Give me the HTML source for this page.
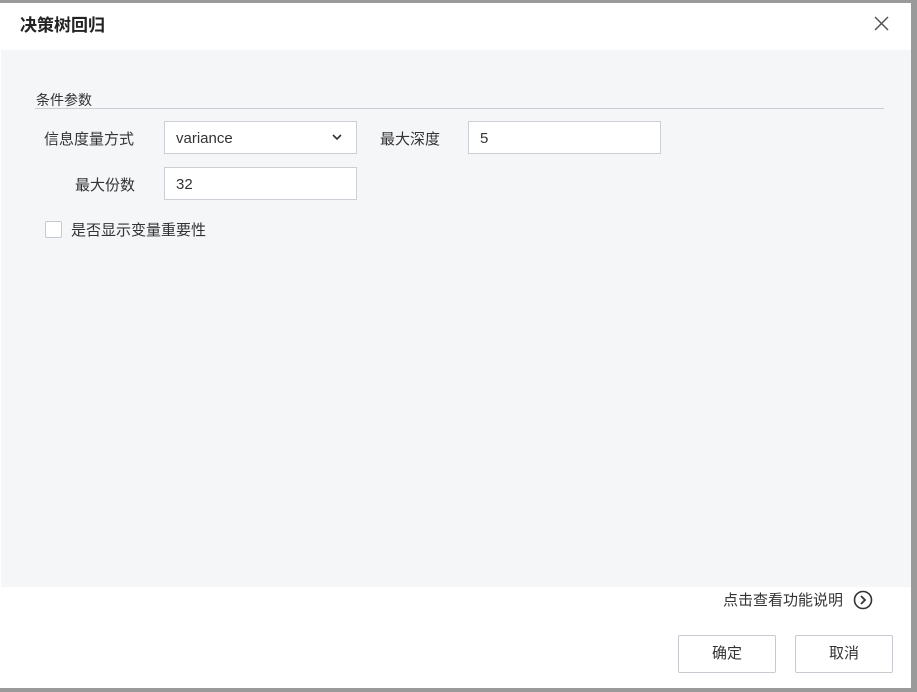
<!DOCTYPE html>
<html><head><meta charset="utf-8"><style>
*{box-sizing:border-box;margin:0;padding:0}
body{width:917px;height:692px;background:#9a9a9a;position:relative;overflow:hidden;font-family:"Liberation Sans","Noto Sans CJK SC",sans-serif;color:#333}
.dlg{position:absolute;left:0;top:3px;width:911px;height:685px;background:#fff}
.title{position:absolute;left:20px;top:8px;font-size:17px;font-weight:bold;color:#222}
.body{position:absolute;left:1px;top:47px;width:910px;height:537px;background:#f4f6f8}
.lbl{position:absolute;font-size:15px;color:#333}
.line{position:absolute;left:34px;top:58px;width:849px;height:1px;background:#c9ced6}
.inp{position:absolute;background:#fff;border:1px solid #ccd0d6;font-size:15px;padding-left:11px;line-height:34px;height:33px;overflow:hidden}
.cb{position:absolute;left:44px;top:171px;width:17px;height:17px;border:1px solid #c6cad0;background:#fff;border-radius:2px}
.btn{position:absolute;width:98px;height:38px;border:1px solid #c6cad0;background:#fff;font-size:15px;text-align:center;line-height:36px;border-radius:2px}
</style></head><body>
<div class="dlg">
<div class="title">决策树回归</div>
<svg style="position:absolute;left:874px;top:13px" width="15" height="15" viewBox="0 0 15 15"><path d="M1 1L14 14M14 1L1 14" stroke="#555" stroke-width="1.5"/></svg>
<div class="body">
<div class="lbl" style="left:35px;top:40px;font-size:14px">条件参数</div>
<div class="line"></div>
<div class="lbl" style="left:43px;top:78px">信息度量方式</div>
<div class="inp" style="left:163px;top:71px;width:193px">variance<svg style="position:absolute;right:14px;top:12px" width="10" height="7" viewBox="0 0 10 7"><path d="M1 1L5 5L9 1" stroke="#333" stroke-width="1.6" fill="none"/></svg></div>
<div class="lbl" style="left:379px;top:78px">最大深度</div>
<div class="inp" style="left:467px;top:71px;width:193px">5</div>
<div class="lbl" style="left:74px;top:124px">最大份数</div>
<div class="inp" style="left:163px;top:117px;width:193px">32</div>
<div class="cb"></div>
<div class="lbl" style="left:70px;top:169px">是否显示变量重要性</div>
</div>
<div class="lbl" style="left:723px;top:586px">点击查看功能说明</div>
<svg style="position:absolute;left:853px;top:587px" width="20" height="20" viewBox="0 0 20 20"><circle cx="10" cy="10" r="8.5" stroke="#333" stroke-width="1.6" fill="none"/><path d="M8 6L12 10L8 14" stroke="#333" stroke-width="1.8" fill="none"/></svg>
<div class="btn" style="left:678px;top:632px">确定</div>
<div class="btn" style="left:795px;top:632px">取消</div>
</div>
</body></html>
